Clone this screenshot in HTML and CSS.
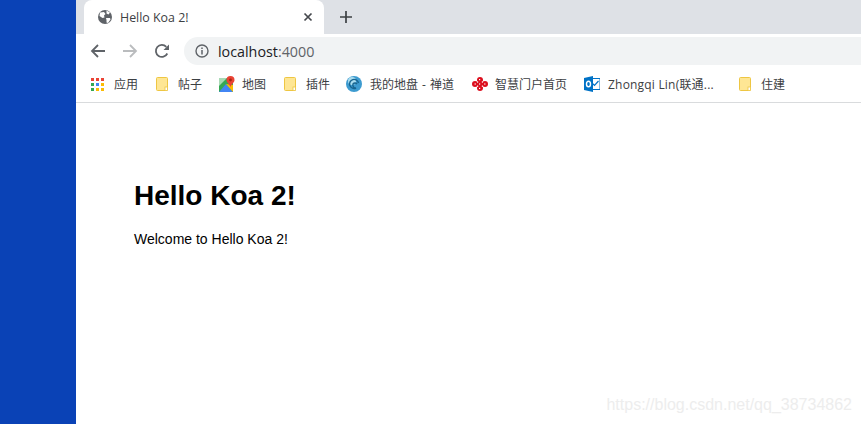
FILE: index.html
```html
<!DOCTYPE html>
<html lang="en">
<head>
    <meta charset="UTF-8">
    <title>Hello Koa 2!</title>
    <link rel="stylesheet" href="styles.css">
</head>
<body>
<div class="desktop"></div>

<div class="browser">
    <!-- Tab strip -->
    <div class="tabstrip">
        <div class="tab">
            <svg class="tab-icon" width="16" height="16" viewBox="0 0 16 16">
                <circle cx="8" cy="8" r="7" fill="#5f6368"/>
                <path d="M3 3.5 L7 3 L8.5 5 L7 6.5 L7.5 8.5 L5.5 9 L2.5 7 Z M9.5 1.6 L13 3.5 L11.5 5.5 L9.5 4.5 Z M9 9 L13 9 L13.5 10.5 L11 14 L9.5 13.5 L9.5 11 Z" fill="#fff"/>
            </svg>
            <span class="tab-title">Hello Koa 2!</span>
            <svg class="tab-close" width="10" height="10" viewBox="0 0 10 10">
                <path d="M1.5 1.5 L8.5 8.5 M8.5 1.5 L1.5 8.5" stroke="#45484d" stroke-width="1.7"/>
            </svg>
        </div>
        <svg class="new-tab" width="12" height="12" viewBox="0 0 12 12">
            <path d="M6 0 V12 M0 6 H12" stroke="#3c4043" stroke-width="1.7"/>
        </svg>
    </div>

    <!-- Address bar -->
    <div class="toolbar">
        <svg class="nav-btn" width="16" height="16" viewBox="0 0 16 16">
            <path d="M15 8 H2 M8 2 L2 8 L8 14" fill="none" stroke="#5f6368" stroke-width="1.8"/>
        </svg>
        <svg class="nav-btn" width="16" height="16" viewBox="0 0 16 16">
            <path d="M1 8 H14 M8 2 L14 8 L8 14" fill="none" stroke="#babcbe" stroke-width="1.8"/>
        </svg>
        <svg class="nav-btn" width="16" height="16" viewBox="0 0 16 16">
            <path d="M13.3 10.5 A6 6 0 1 1 12.3 3.8" fill="none" stroke="#5f6368" stroke-width="1.8"/>
            <path d="M15 1.5 V7 H9.5 Z" fill="#5f6368"/>
        </svg>
        <div class="omnibox">
            <svg width="14" height="14" viewBox="0 0 14 14">
                <circle cx="7" cy="7" r="6" fill="none" stroke="#5f6368" stroke-width="1.4"/>
                <path d="M7 6 V10.5 M7 3.4 V5" stroke="#5f6368" stroke-width="1.5"/>
            </svg>
            <span class="url">localhost<span class="port">:4000</span></span>
        </div>
    </div>

    <!-- Bookmarks -->
    <div class="bookmarks">
        <div class="bookmark apps">
            <svg width="13" height="13" viewBox="0 0 13 13">
                <rect x="0" y="0" width="3" height="3" fill="#ea4335"/>
                <rect x="5" y="0" width="3" height="3" fill="#ea4335"/>
                <rect x="10" y="0" width="3" height="3" fill="#ea4335"/>
                <rect x="0" y="5" width="3" height="3" fill="#34a853"/>
                <rect x="5" y="5" width="3" height="3" fill="#4285f4"/>
                <rect x="10" y="5" width="3" height="3" fill="#fbbc05"/>
                <rect x="0" y="10" width="3" height="3" fill="#34a853"/>
                <rect x="5" y="10" width="3" height="3" fill="#fbbc05"/>
                <rect x="10" y="10" width="3" height="3" fill="#fbbc05"/>
            </svg>
            <span>应用</span>
        </div>
        <div class="bookmark tiezi">
            <svg class="note" width="12" height="14" viewBox="0 0 12 14">
                <rect x=".5" y=".5" width="11" height="13" rx="1" fill="#fee694" stroke="#eec643"/>
                <rect x="9" y="10" width="2.5" height="3.5" fill="#fff" stroke="#eec643" stroke-width=".8"/>
            </svg>
            <span>帖子</span>
        </div>
        <div class="bookmark maps">
            <svg width="16" height="16" viewBox="0 0 16 16">
                <rect x="0" y="2" width="14" height="14" fill="#34a853"/>
                <path d="M0 16 L7 8 L14 16 Z" fill="#4285f4"/>
                <path d="M7 8 L14 16 V9 Z" fill="#fbbc05"/>
                <path d="M0 2 H8 L0 10 Z" fill="#a8dab5"/>
                <path d="M11.5 0 A4 4 0 0 1 15.5 4 C15.5 6.5 12.5 8 11.5 11 C10.5 8 7.5 6.5 7.5 4 A4 4 0 0 1 11.5 0 Z" fill="#ea4335"/>
                <circle cx="11.5" cy="4" r="1.4" fill="#a52714"/>
            </svg>
            <span>地图</span>
        </div>
        <div class="bookmark plugins">
            <svg class="note" width="12" height="14" viewBox="0 0 12 14">
                <rect x=".5" y=".5" width="11" height="13" rx="1" fill="#fee694" stroke="#eec643"/>
                <rect x="9" y="10" width="2.5" height="3.5" fill="#fff" stroke="#eec643" stroke-width=".8"/>
            </svg>
            <span>插件</span>
        </div>
        <div class="bookmark zentao">
            <svg width="16" height="16" viewBox="0 0 16 16">
                <circle cx="8" cy="8" r="8" fill="#3d9bd0"/>
                <circle cx="6" cy="5" r="4" fill="#a9dcef"/>
                <path d="M12.5 7 A4.5 4.5 0 1 0 10 12 A3 3 0 0 1 7 8 A2.5 2.5 0 0 1 11 8" fill="none" stroke="#17648f" stroke-width="1.4"/>
            </svg>
            <span>我的地盘 - 禅道</span>
        </div>
        <div class="bookmark unicom">
            <svg width="16" height="14" viewBox="0 0 16 14">
                <g fill="#dc0f1e">
                    <circle cx="8" cy="3" r="3"/>
                    <circle cx="8" cy="11" r="3"/>
                    <circle cx="3" cy="7" r="3"/>
                    <circle cx="13" cy="7" r="3"/>
                    <circle cx="8" cy="7" r="3"/>
                </g>
                <g fill="#fff">
                    <rect x="7" y="2" width="1.2" height="1.2"/>
                    <rect x="7" y="6.4" width="1.2" height="1.2"/>
                    <rect x="7" y="10.8" width="1.2" height="1.2"/>
                    <rect x="2.6" y="6.4" width="1.2" height="1.2"/>
                    <rect x="12.2" y="6.4" width="1.2" height="1.2"/>
                    <rect x="5" y="4.4" width="1.2" height="1.2"/>
                    <rect x="9.8" y="4.4" width="1.2" height="1.2"/>
                    <rect x="5" y="8.6" width="1.2" height="1.2"/>
                    <rect x="9.8" y="8.6" width="1.2" height="1.2"/>
                </g>
            </svg>
            <span>智慧门户首页</span>
        </div>
        <div class="bookmark outlook">
            <svg width="16" height="16" viewBox="0 0 16 16">
                <rect x="6" y="2.5" width="10" height="11" fill="#fff" stroke="#0072c6"/>
                <path d="M8 7 L10.5 9.5 L14.5 5" fill="none" stroke="#0072c6" stroke-width="1.2"/>
                <path d="M0 2 L9 0 V16 L0 14 Z" fill="#0072c6"/>
                <ellipse cx="4.5" cy="8" rx="2" ry="2.8" fill="none" stroke="#fff" stroke-width="1.4"/>
            </svg>
            <span>Zhongqi Lin(联通...</span>
        </div>
        <div class="bookmark zhujian">
            <svg class="note" width="12" height="14" viewBox="0 0 12 14">
                <rect x=".5" y=".5" width="11" height="13" rx="1" fill="#fee694" stroke="#eec643"/>
                <rect x="9" y="10" width="2.5" height="3.5" fill="#fff" stroke="#eec643" stroke-width=".8"/>
            </svg>
            <span>住建</span>
        </div>
    </div>

    <!-- Page content -->
    <div class="page">
        <h1>Hello Koa 2!</h1>
        <p>Welcome to Hello Koa 2!</p>
    </div>
</div>

<div class="watermark">https://blog.csdn.net/qq_38734862</div>
</body>
</html>
```

FILE: styles.css
```css
* {
    margin: 0;
    padding: 0;
    box-sizing: border-box;
}

html, body {
    height: 100%;
    overflow: hidden;
}

body {
    display: flex;
    background-color: #fff;
    font-family: 'Liberation Sans', 'Noto Sans CJK SC', sans-serif;
}

.desktop {
    width: 76px;
    flex-shrink: 0;
    background-color: #0a42b6;
}

.browser {
    flex: 1;
    display: flex;
    flex-direction: column;
}

.tabstrip {
    height: 34px;
    padding-left: 8px;
    display: flex;
    align-items: flex-end;
    background-color: #dee1e6;
}

.tab {
    width: 240px;
    height: 34px;
    padding: 0 11px 0 13px;
    display: flex;
    align-items: center;
    background-color: #fff;
    border-radius: 8px 8px 0 0;
}

.tab-title {
    flex: 1;
    margin-left: 7px;
    font-size: 12.4px;
    font-family: 'Open Sans', 'Liberation Sans', sans-serif;
    color: #3c4043;
}

.new-tab {
    margin: 0 0 11px 16px;
}

.toolbar {
    height: 34px;
    padding-left: 14px;
    display: flex;
    align-items: center;
    background-color: #fff;
}

.nav-btn {
    margin-right: 16px;
}

.omnibox {
    flex: 1;
    height: 28px;
    margin-left: -2px;
    padding-left: 11px;
    display: flex;
    align-items: center;
    gap: 9px;
    background-color: #f1f3f4;
    border-radius: 14px 0 0 14px;
}

.url {
    font-size: 14.3px;
    font-family: 'Open Sans', 'Liberation Sans', sans-serif;
    color: #202124;
}

.port {
    color: #5f6368;
}

.bookmarks {
    height: 35px;
    padding: 0 0 2px 15px;
    display: flex;
    align-items: center;
    background-color: #fff;
    border-bottom: 1px solid #d9dbdd;
    font-size: 12px;
    font-family: 'Open Sans', 'Noto Sans CJK SC', sans-serif;
    color: #3c4043;
}

.bookmark {
    display: flex;
    align-items: center;
    flex-shrink: 0;
    white-space: nowrap;
}

.apps {
    width: 65px;
    gap: 10px;
}

.tiezi {
    width: 63px;
    gap: 10px;
}

.maps {
    width: 65px;
    gap: 7px;
}

.plugins {
    width: 62px;
    gap: 10px;
}

.zentao {
    width: 126px;
    gap: 8px;
    word-spacing: 1px;
}

.unicom {
    width: 112px;
    gap: 7px;
}

.outlook {
    width: 155px;
    gap: 8px;
    letter-spacing: 0.2px;
}

.zhujian {
    gap: 10px;
}

.page {
    flex: 1;
    padding: 77px 58px;
    background-color: #fff;
    color: #000;
}

.page h1 {
    margin-bottom: 20px;
    font-size: 28px;
    line-height: 31px;
}

.page p {
    font-size: 14px;
    line-height: 16px;
}

/* csdn image stamp */
.watermark {
    position: absolute;
    right: 9px;
    bottom: 10px;
    font-size: 16px;
    color: #ededed;
}
```
